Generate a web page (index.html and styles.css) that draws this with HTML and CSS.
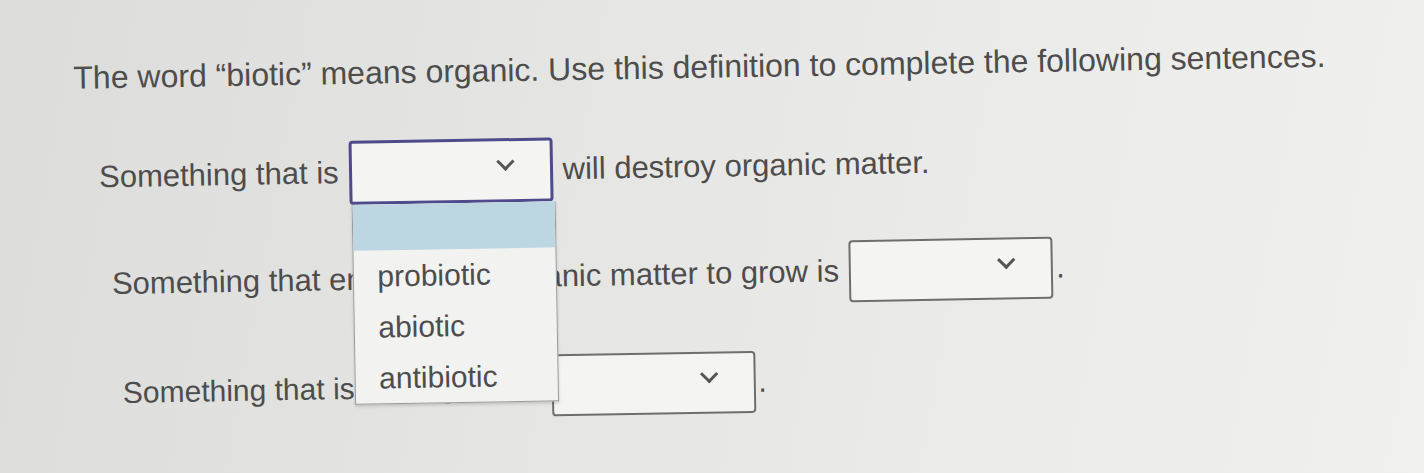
FILE: index.html
```html
<!DOCTYPE html>
<html lang="en">
<head>
    <meta charset="UTF-8">
    <title>Biotic - Fill in the blanks</title>
    <link rel="stylesheet" href="styles.css">
</head>
<body>
    <div class="question">
        <p class="prompt">The word “biotic” means organic. Use this definition to complete the following sentences.</p>

        <div class="row row-1">
            <span>Something that is</span>
            <div class="blank open">
                <span class="chevron"></span>
                <ul class="options">
                    <li class="selected"></li>
                    <li>probiotic</li>
                    <li>abiotic</li>
                    <li>antibiotic</li>
                </ul>
            </div>
            <span>will destroy organic matter.</span>
        </div>

        <div class="row row-2">
            <span>Something that encourages organic matter to grow is</span>
            <div class="blank"><span class="chevron"></span></div>
            <span class="stop">.</span>
        </div>

        <div class="row row-3">
            <span>Something that is not organic is</span>
            <div class="blank"><span class="chevron"></span></div>
            <span class="stop">.</span>
        </div>
    </div>
</body>
</html>
```

FILE: styles.css
```css
body {
    margin: 0;
    height: 473px;
    overflow: hidden;
    font-family: 'Liberation Sans', Arial, sans-serif;
    color: #4d4d4d;
    background: linear-gradient(100deg, #dcdcda 0%, #e4e4e2 35%, #ebebe9 70%, #f0f0ee 100%);
}
.question {
    padding: 61px 0 0 72px;
    transform: rotate(-1deg);
    transform-origin: 0 0;
}
.prompt {
    margin: 0 0 49px;
    font-size: 32px;
    line-height: 37px;
}
.row {
    display: flex;
    align-items: center;
    gap: 10px;
    font-size: 31px;
}
.row-1 {
    margin-left: 24px;
}
.row-2 {
    margin: 44px 0 0 35px;
}
.row-3 {
    margin: 47px 0 0 44px;
    font-size: 30px;
}
.stop {
    margin-left: -7px;
}
.blank {
    position: relative;
    width: 200px;
    height: 58px;
    border: 2px solid #6e6e6e;
    border-radius: 4px;
    background: #f4f4f2;
}
.blank.open {
    width: 198px;
    border: 3px solid #4f4a8c;
}
.chevron {
    position: absolute;
    right: 38px;
    top: 14px;
    width: 10px;
    height: 10px;
    border-right: 3px solid #555;
    border-bottom: 3px solid #555;
    transform: rotate(45deg);
}
/* open list sits over the rows below */
.options {
    position: absolute;
    top: 61px;
    left: -1px;
    width: 202px;
    margin: 0;
    padding: 0;
    list-style: none;
    background: #f2f2f0;
    border: 1px solid #9a9a9a;
    border-top: none;
    box-shadow: 0 2px 3px rgba(0, 0, 0, 0.15);
    z-index: 2;
    font-size: 30px;
}
.options li {
    height: 51px;
    line-height: 51px;
    padding-left: 24px;
}
.options li.selected {
    height: 46px;
    background: #bcd6e2;
}
```
